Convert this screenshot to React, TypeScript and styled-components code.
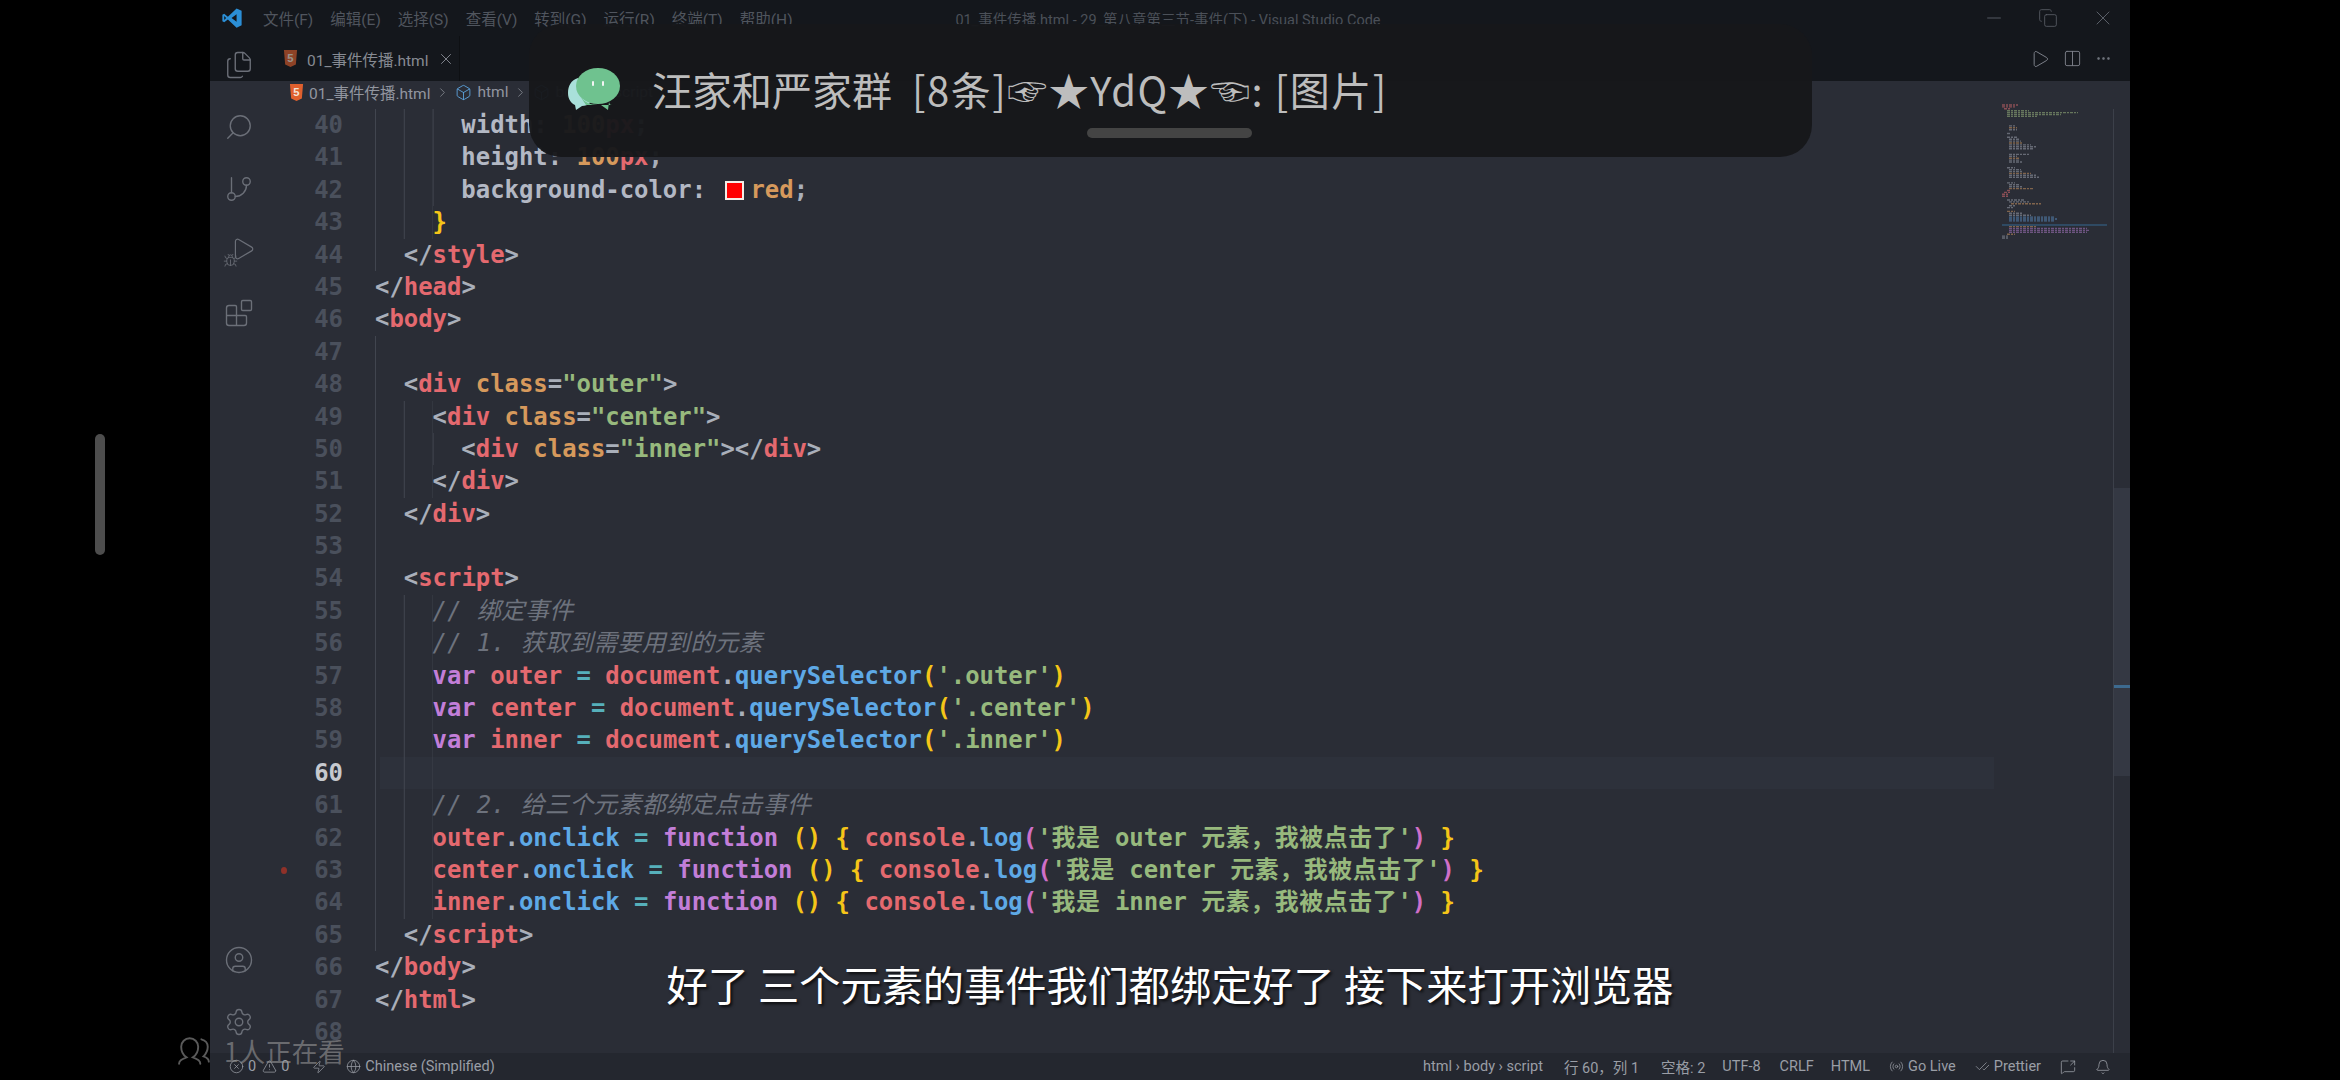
import React from "react";
import styled, { createGlobalStyle } from "styled-components";
import {
    Bell, Blocks, Bug, CheckCheck, CircleUser, CircleX, Columns2, Copy, Ellipsis, Files, Globe,
    GitBranch, Minus, Play, Radio, Search, Settings, TriangleAlert, X, Zap, Box, ChevronRight,
    MessageSquareShare,
} from "lucide-react";

type Kind = "tag" | "punct" | "attr" | "str" | "cjk" | "kw" | "fn" | "op" | "paren" | "pink" | "prop" | "num" | "unit" | "var" | "comment" | "swatch";
type Tok = [string, Kind];
type Line = { n: number; depth: number; toks: Tok[]; indent?: number };

const COLORS: Record<Kind, string> = {
    tag: "#e4696f",
    punct: "#a9afba",
    attr: "#d6995c",
    str: "#97b97d",
    cjk: "#97b97d",
    kw: "#c27ed8",
    fn: "#5ea9e6",
    op: "#56b0bb",
    paren: "#f5c518",
    pink: "#cf6fc8",
    prop: "#b3b8c4",
    num: "#d6995c",
    unit: "#e4696f",
    var: "#e4696f",
    comment: "#6d727d",
    swatch: "#ff0000",
};

const q = (name: string): Tok[] => [["var ", "kw"], [name, "var"], [" = ", "op"], ["document", "var"], [".", "punct"], ["querySelector", "fn"], ["(", "paren"], [`'.${name}'`, "str"], [")", "paren"]];
const click = (name: string): Tok[] => [
    [name, "var"], [".", "punct"], ["onclick", "fn"], [" = ", "op"], ["function ", "kw"], ["() { ", "paren"],
    ["console", "var"], [".", "punct"], ["log", "fn"], ["(", "pink"], ["'", "str"], ["我是", "cjk"], [` ${name} `, "str"], ["元素，我被点击了", "cjk"], ["'", "str"], [")", "pink"], [" }", "paren"],
];

const LINES: Line[] = [
    { n: 40, depth: 3, indent: 3, toks: [["width: ", "prop"], ["100", "num"], ["px", "unit"], [";", "punct"]] },
    { n: 41, depth: 3, indent: 3, toks: [["height: ", "prop"], ["100", "num"], ["px", "unit"], [";", "punct"]] },
    { n: 42, depth: 3, indent: 3, toks: [["background-color: ", "prop"], ["", "swatch"], ["red", "num"], [";", "punct"]] },
    { n: 43, depth: 2, indent: 2, toks: [["}", "paren"]] },
    { n: 44, depth: 1, indent: 1, toks: [["</", "punct"], ["style", "tag"], [">", "punct"]] },
    { n: 45, depth: 0, toks: [["</", "punct"], ["head", "tag"], [">", "punct"]] },
    { n: 46, depth: 0, toks: [["<", "punct"], ["body", "tag"], [">", "punct"]] },
    { n: 47, depth: 1, toks: [] },
    { n: 48, depth: 1, indent: 1, toks: [["<", "punct"], ["div", "tag"], [" class", "attr"], ["=", "punct"], ['"outer"', "str"], [">", "punct"]] },
    { n: 49, depth: 2, indent: 2, toks: [["<", "punct"], ["div", "tag"], [" class", "attr"], ["=", "punct"], ['"center"', "str"], [">", "punct"]] },
    { n: 50, depth: 3, indent: 3, toks: [["<", "punct"], ["div", "tag"], [" class", "attr"], ["=", "punct"], ['"inner"', "str"], ["></", "punct"], ["div", "tag"], [">", "punct"]] },
    { n: 51, depth: 2, indent: 2, toks: [["</", "punct"], ["div", "tag"], [">", "punct"]] },
    { n: 52, depth: 1, indent: 1, toks: [["</", "punct"], ["div", "tag"], [">", "punct"]] },
    { n: 53, depth: 1, toks: [] },
    { n: 54, depth: 1, indent: 1, toks: [["<", "punct"], ["script", "tag"], [">", "punct"]] },
    { n: 55, depth: 2, indent: 2, toks: [["// 绑定事件", "comment"]] },
    { n: 56, depth: 2, indent: 2, toks: [["// 1. 获取到需要用到的元素", "comment"]] },
    { n: 57, depth: 2, indent: 2, toks: q("outer") },
    { n: 58, depth: 2, indent: 2, toks: q("center") },
    { n: 59, depth: 2, indent: 2, toks: q("inner") },
    { n: 60, depth: 2, toks: [] },
    { n: 61, depth: 2, indent: 2, toks: [["// 2. 给三个元素都绑定点击事件", "comment"]] },
    { n: 62, depth: 2, indent: 2, toks: click("outer") },
    { n: 63, depth: 2, indent: 2, toks: click("center") },
    { n: 64, depth: 2, indent: 2, toks: click("inner") },
    { n: 65, depth: 1, indent: 1, toks: [["</", "punct"], ["script", "tag"], [">", "punct"]] },
    { n: 66, depth: 0, toks: [["</", "punct"], ["body", "tag"], [">", "punct"]] },
    { n: 67, depth: 0, toks: [["</", "punct"], ["html", "tag"], [">", "punct"]] },
    { n: 68, depth: 0, toks: [] },
];

const MENUS = ["文件(F)", "编辑(E)", "选择(S)", "查看(V)", "转到(G)", "运行(R)", "终端(T)", "帮助(H)"];

// minimap rows: [line, indent, width]
const MINI: [number, number, number][] = [
    [0, 0, 16], [1, 0, 14], [2, 2, 6], [3, 5, 22], [4, 5, 71], [5, 5, 54], [6, 5, 30],
    [11, 7, 6], [12, 7, 8], [13, 7, 8], [15, 5, 3],
    [17, 5, 10], [18, 7, 10], [19, 7, 12], [20, 7, 14], [21, 7, 22], [22, 7, 28], [23, 7, 24],
    [26, 7, 20], [27, 7, 8], [28, 7, 10], [29, 7, 10], [30, 7, 14],
    [33, 5, 8], [34, 7, 12], [35, 7, 14], [36, 7, 22], [37, 7, 28], [38, 7, 30],
    [41, 5, 8], [42, 7, 10], [43, 7, 14], [44, 7, 24], [45, 5, 3],
    [46, 2, 6], [47, 0, 6], [48, 0, 6], [50, 5, 18], [51, 7, 20], [52, 9, 30], [53, 7, 6], [54, 5, 6],
    [56, 5, 8], [57, 7, 14], [58, 7, 22], [59, 7, 46], [60, 7, 48], [61, 7, 46],
    [64, 7, 28], [65, 7, 78], [66, 7, 80], [67, 7, 78], [68, 5, 8], [69, 0, 6], [70, 0, 6],
];

const miniTint = (line: number) => {
    if (line < 3 || (line > 44 && line < 50)) return "#c9656b";
    if (line < 7) return "#8fa878";
    if (line > 58 && line < 62) return "#5a8fc4";
    if (line > 64 && line < 68) return "#9a6fb4";
    if (line % 4 === 0) return "#b98a5c";
    return "#8f94a0";
};

const GlobalStyle = createGlobalStyle`
    html, body {
        margin: 0;
        padding: 0;
        background: #000;
        overflow: hidden;
    }
    * {
        box-sizing: border-box;
    }
`;

const App: React.FC = () => {
    return (
        <Page>
            <GlobalStyle />
            <SideGutter>
                <ScrollPill />
            </SideGutter>
            <Frame>
                <TitleBar>
                    <MenuGroup>
                        <VsLogo />
                        {MENUS.map((m) => <MenuItem key={m}>{m}</MenuItem>)}
                    </MenuGroup>
                    <WindowTitle>01_事件传播.html - 29_第八章第三节-事件(下) - Visual Studio Code</WindowTitle>
                    <WindowButtons>
                        <Minus size={22} strokeWidth={1} />
                        <Copy size={20} strokeWidth={1} />
                        <X size={24} strokeWidth={1} />
                    </WindowButtons>
                </TitleBar>
                <TabBar>
                    <Tab>
                        <Html5 $dim />
                        <TabName>01_事件传播.html</TabName>
                        <X size={18} strokeWidth={1.2} color="#8b8f97" />
                    </Tab>
                    <TabActions>
                        <Play size={20} strokeWidth={1.2} />
                        <Columns2 size={19} strokeWidth={1.2} />
                        <Ellipsis size={17} strokeWidth={1.5} />
                    </TabActions>
                </TabBar>
                <Main>
                    <ActivityBar>
                        <ActivityGroup>
                            <Files size={30} strokeWidth={1.1} />
                            <Search size={30} strokeWidth={1.1} style={{ transform: "scaleX(-1)" }} />
                            <GitBranch size={30} strokeWidth={1.1} />
                            <DebugIcon>
                                <Play size={26} strokeWidth={1.1} />
                                <BugBadge><Bug size={15} strokeWidth={1.3} /></BugBadge>
                            </DebugIcon>
                            <Blocks size={30} strokeWidth={1.1} />
                        </ActivityGroup>
                        <ActivityGroup>
                            <CircleUser size={30} strokeWidth={1.1} />
                            <Settings size={30} strokeWidth={1.1} />
                        </ActivityGroup>
                    </ActivityBar>
                    <EditorColumn>
                        <Breadcrumb>
                            <Html5 />
                            <CrumbText>01_事件传播.html</CrumbText>
                            <ChevronRight size={15} strokeWidth={1.2} />
                            <Box size={17} strokeWidth={1.2} color="#5ea9e6" />
                            <CrumbText>html</CrumbText>
                            <ChevronRight size={15} strokeWidth={1.2} />
                            <Box size={17} strokeWidth={1.2} color="#5ea9e6" />
                            <CrumbText>body</CrumbText>
                            <ChevronRight size={15} strokeWidth={1.2} />
                            <CrumbText>script</CrumbText>
                        </Breadcrumb>
                        <EditorBody>
                            <Code>
                                {LINES.map((line) => (
                                    <Row key={line.n}>
                                        <LineNo $active={line.n === 60}>
                                            {line.n === 63 && <BreakDot />}
                                            {line.n}
                                        </LineNo>
                                        <CodeCell $active={line.n === 60} $depth={line.depth}>
                                            {" ".repeat((line.indent ?? 0) * 2)}
                                            {line.toks.map(([text, kind], i) =>
                                                kind === "swatch"
                                                    ? <Swatch key={i} />
                                                    : <Token key={i} $kind={kind}>{text}</Token>
                                            )}
                                        </CodeCell>
                                    </Row>
                                ))}
                            </Code>
                            <Minimap>
                                <svg width="113" height="150" viewBox="0 0 113 150">
                                    <rect x="8" y="120" width="105" height="2" fill="#2f4a63" />
                                    {MINI.map(([l, x, w], i) => (
                                        <line key={i} x1={8 + x} x2={8 + x + w} y1={l * 1.9 + 1} y2={l * 1.9 + 1} stroke={miniTint(l)} strokeWidth="1.4" strokeDasharray="3 1 2 1" opacity="0.6" />
                                    ))}
                                </svg>
                            </Minimap>
                            <ScrollTrack>
                                <ScrollThumb />
                                <ScrollTick />
                            </ScrollTrack>
                        </EditorBody>
                    </EditorColumn>
                </Main>
                <StatusBar>
                    <StatusGroup>
                        <StatusItem><CircleX size={15} strokeWidth={1.2} /> 0</StatusItem>
                        <StatusItem $ml={-13}><TriangleAlert size={15} strokeWidth={1.2} /> 0</StatusItem>
                        <StatusItem $ml={4}><Zap size={14} strokeWidth={1.2} /></StatusItem>
                        <StatusItem $ml={1}><Globe size={15} strokeWidth={1.2} /> Chinese (Simplified)</StatusItem>
                    </StatusGroup>
                    <StatusGroup>
                        <StatusItem>html › body › script</StatusItem>
                        <StatusItem $ml={2}>行 60，列 1</StatusItem>
                        <StatusItem $ml={3}>空格: 2</StatusItem>
                        <StatusItem $ml={-2}>UTF-8</StatusItem>
                        <StatusItem>CRLF</StatusItem>
                        <StatusItem $ml={-2}>HTML</StatusItem>
                        <StatusItem><Radio size={15} strokeWidth={1.2} /> Go Live</StatusItem>
                        <StatusItem><CheckCheck size={15} strokeWidth={1.2} /> Prettier</StatusItem>
                        <StatusItem><MessageSquareShare size={16} strokeWidth={1.2} /></StatusItem>
                        <StatusItem><Bell size={16} strokeWidth={1.2} /></StatusItem>
                    </StatusGroup>
                </StatusBar>
            </Frame>
            <Notification>
                <ChatIcon />
                <NotificationText>
                    汪家和严家群{"\u2002"}<NotificationTail>[8条]☞★YdQ★☜: [图片]</NotificationTail>
                </NotificationText>
                <NotificationGrip />
            </Notification>
            <Subtitle>好了 三个元素的事件我们都绑定好了 接下来打开浏览器</Subtitle>
            <Viewers>
                <ViewerIcon />
                <span>1人正在看</span>
            </Viewers>
        </Page>
    );
};

export default App;

const VsLogo = () => (
    <LogoSvg viewBox="0 0 24 24">
        <path d="M17 1.5 22.5 4v16L17 22.5 7.5 13.5 3.5 16.6 1.5 15.6V8.4l2-1 4 3.1L17 1.5Zm0 6.3L11.5 12l5.5 4.2V7.8ZM3.5 9.8v4.4L5.6 12 3.5 9.8Z" fill="#2b8fd6" />
    </LogoSvg>
);

const Html5: React.FC<{ $dim?: boolean }> = ({ $dim }) => (
    <HtmlSvg viewBox="0 0 16 18" $dim={$dim}>
        <path d="M1 0h14l-1.3 15.5L8 18l-5.7-2.5L1 0Z" fill="#e0602e" />
        <text x="8" y="13" textAnchor="middle" fontSize="12" fontWeight="700" fontFamily="'Liberation Sans', sans-serif" fill="#f3e4d8">5</text>
    </HtmlSvg>
);

const ChatIcon = () => (
    <ChatSvg viewBox="0 0 52 42">
        <path d="M10 10C3 12 0 18 0 25c0 6 3 10 7 12l1 5 6-4c3 0 6-1 8-3Z" fill="#a9e0da" />
        <ellipse cx="30" cy="18" rx="22" ry="18" fill="#6fc28f" />
        <path d="M12 28c4 6 10 9 18 9h16c-4 0-4 0-5-3l-1 8-7-5H18Z" fill="#6fc28f" />
        <rect x="24" y="13" width="2" height="5" rx="1" fill="#f4f4f4" />
        <rect x="34" y="13" width="2" height="5" rx="1" fill="#f4f4f4" />
    </ChatSvg>
);

const ViewerIcon = () => (
    <ViewerSvg viewBox="0 0 32 26" fill="none" stroke="currentColor" strokeWidth="1.8" strokeLinecap="round">
        <path d="M1 25c0-3 2-4 7-6-3-2-5-6-5-10a8 8 0 0 1 16 0c0 4-2 8-5 10 5 2 7 3 7 6" />
        <path d="M22 2c4 1 6 4 6 7 0 4-2 7-4 9 3 1 5 3 5 5" />
    </ViewerSvg>
);

const MONO = `"DejaVu Sans Mono", "Noto Sans CJK SC", monospace`;
const UI = `Roboto, "Noto Sans CJK SC", sans-serif`;

const Page = styled.div`
    position: relative;
    display: flex;
    width: 2340px;
    height: 1080px;
    background: #000;
    overflow: hidden;
    font-family: ${UI};
`;

const SideGutter = styled.div`
    position: relative;
    width: 210px;
    flex-shrink: 0;
`;

const ScrollPill = styled.div`
    position: absolute;
    left: 95px;
    top: 434px;
    width: 10px;
    height: 121px;
    border-radius: 5px;
    background: #4d4d4d;
`;

const Frame = styled.div`
    display: flex;
    flex-direction: column;
    width: 1920px;
    height: 1080px;
    background: #2a2d36;
`;

const TitleBar = styled.div`
    display: grid;
    grid-template-columns: 1fr auto 1fr;
    align-items: center;
    height: 36px;
    padding: 0 15px 0 11px;
    background: #14171c;
`;

const MenuGroup = styled.div`
    display: flex;
    align-items: center;
    gap: 17px;
`;

const LogoSvg = styled.svg`
    width: 22px;
    height: 22px;
    margin-right: 3px;
`;

const MenuItem = styled.span`
    font-size: 15.5px;
    color: #50555e;
`;

const WindowTitle = styled.div`
    font-size: 14.5px;
    color: #4b5058;
    white-space: nowrap;
`;

const WindowButtons = styled.div`
    display: flex;
    justify-content: flex-end;
    align-items: center;
    gap: 33px;
    color: #5a5f68;
`;

const TabBar = styled.div`
    display: flex;
    justify-content: space-between;
    height: 45px;
    padding-right: 18px;
    background: #14171c;
`;

const Tab = styled.div`
    display: flex;
    align-items: center;
    width: 250px;
    padding-left: 73px;
    gap: 9px;
    border-right: 1px solid #0e1013;
`;

const TabName = styled.span`
    font-size: 15.5px;
    color: #878b93;
    white-space: nowrap;
`;

const TabActions = styled.div`
    display: flex;
    align-items: center;
    gap: 13px;
    color: #7c8089;
`;

const HtmlSvg = styled.svg<{ $dim?: boolean }>`
    width: 15px;
    height: 17px;
    flex-shrink: 0;
    opacity: ${(p) => (p.$dim ? 0.6 : 1)};
`;

const Main = styled.div`
    display: flex;
    flex: 1;
    min-height: 0;
`;

const ActivityBar = styled.div`
    position: relative;
    display: flex;
    flex-direction: column;
    justify-content: space-between;
    width: 60px;
    margin-top: -31px;
    padding: 0 0 16px 14px;
    color: #6b6f78;
`;

const ActivityGroup = styled.div`
    display: flex;
    flex-direction: column;
    gap: 32px;
`;

const DebugIcon = styled.div`
    position: relative;
    width: 30px;
    height: 30px;
    padding-left: 6px;
`;

const BugBadge = styled.div`
    position: absolute;
    left: -1px;
    bottom: -2px;
    display: flex;
`;

const EditorColumn = styled.div`
    display: flex;
    flex-direction: column;
    flex: 1;
    min-width: 0;
`;

const Breadcrumb = styled.div`
    display: flex;
    align-items: center;
    gap: 5px;
    height: 28px;
    padding: 0 0 6px 19px;
    color: #8d9199;
`;

const CrumbText = styled.span`
    font-size: 15.5px;
    color: #9296a0;
    white-space: nowrap;
`;

const EditorBody = styled.div`
    display: flex;
    flex: 1;
    min-height: 0;
`;

const Code = styled.div`
    flex: 1;
    min-width: 0;
    overflow: hidden;
`;

const Row = styled.div`
    display: flex;
    height: 32.4px;
    line-height: 32.4px;
    font-family: ${MONO};
    font-size: 23.92px;
    font-weight: 700;
    white-space: pre;
`;

const LineNo = styled.div<{ $active?: boolean }>`
    position: relative;
    width: 105px;
    padding-right: 32px;
    text-align: right;
    flex-shrink: 0;
    color: ${(p) => (p.$active ? "#c6c9cf" : "#4a505c")};
`;

const BreakDot = styled.span`
    position: absolute;
    left: 11px;
    top: 13px;
    width: 6px;
    height: 7px;
    border-radius: 50%;
    background: #8f3129;
`;

const CodeCell = styled.div<{ $active?: boolean; $depth: number }>`
    position: relative;
    flex: 1;
    background: ${(p) => (p.$active ? "linear-gradient(#2d313b, #2d313b) 5px 0 no-repeat" : "transparent")};

    &::before {
        content: "";
        position: absolute;
        left: 0;
        top: 0;
        bottom: 0;
        width: ${(p) => p.$depth * 28.8}px;
        background-image: linear-gradient(to right, #41454f 1px, transparent 1px);
        background-size: 28.8px 100%;
    }
`;

const Token = styled.span<{ $kind: Kind }>`
    position: relative;
    color: ${(p) => COLORS[p.$kind]};
    font-weight: ${(p) => (p.$kind === "comment" ? 400 : 700)};
    font-style: ${(p) => (p.$kind === "comment" ? "italic" : "normal")};
    letter-spacing: ${(p) => (p.$kind === "cjk" ? "0.6px" : p.$kind === "comment" ? "0.3px" : "0")};
`;

const Swatch = styled.span`
    display: inline-block;
    position: relative;
    top: 2px;
    width: 19px;
    height: 19px;
    margin: 0 6px 0 5px;
    background: #f00;
    border: 2px solid #f4ece6;
`;

const Minimap = styled.div`
    width: 119px;
    flex-shrink: 0;
    margin-top: -5px;
`;

const ScrollTrack = styled.div`
    position: relative;
    width: 17px;
    flex-shrink: 0;
    border-left: 1px solid #3c404a;
`;

const ScrollThumb = styled.div`
    margin-top: 379px;
    height: 288px;
    background: #343843;
`;

const ScrollTick = styled.div`
    position: absolute;
    left: 0;
    right: 0;
    top: 576px;
    height: 3px;
    background: #3d6a8f;
`;

const StatusBar = styled.div`
    display: flex;
    justify-content: space-between;
    align-items: center;
    height: 27px;
    padding: 0 19px 0 19px;
    background: #24272f;
    color: #9a9ea6;
    font-size: 14.5px;
`;

const StatusGroup = styled.div`
    display: flex;
    align-items: center;
    gap: 19px;
`;

const StatusItem = styled.span<{ $ml?: number }>`
    display: inline-flex;
    align-items: center;
    gap: 4px;
    margin-left: ${(p) => p.$ml ?? 0}px;
    white-space: nowrap;
`;

const Notification = styled.div`
    position: absolute;
    left: 529px;
    top: 24px;
    display: flex;
    align-items: center;
    width: 1283px;
    height: 133px;
    padding: 0 0 4px 39px;
    border-radius: 32px;
    background: rgba(23, 24, 27, 0.97);
`;

const ChatSvg = styled.svg`
    width: 52px;
    height: 42px;
    flex-shrink: 0;
`;

const NotificationText = styled.div`
    margin-left: 32px;
    font-family: "Noto Sans CJK SC", "DejaVu Sans", sans-serif;
    font-size: 40px;
    color: #bdbdbd;
    white-space: nowrap;
`;

const NotificationTail = styled.span`
    letter-spacing: 1.5px;
`;

const NotificationGrip = styled.div`
    position: absolute;
    left: 558px;
    top: 104px;
    width: 165px;
    height: 10px;
    border-radius: 5px;
    background: #444;
`;

const Subtitle = styled.div`
    position: absolute;
    left: 210px;
    width: 1920px;
    top: 955px;
    text-align: center;
    font-family: "Noto Sans CJK SC", sans-serif;
    font-size: 41.2px;
    line-height: 56px;
    color: #fff;
    text-shadow: 2px 2px 3px rgba(0, 0, 0, 0.75);
    white-space: nowrap;
`;

const Viewers = styled.div`
    position: absolute;
    left: 178px;
    top: 1031px;
    display: flex;
    align-items: center;
    gap: 12px;
    font-family: "Noto Sans CJK SC", sans-serif;
    font-size: 26.5px;
    color: rgba(150, 150, 150, 0.6);
`;

const ViewerSvg = styled.svg`
    width: 34px;
    height: 28px;
`;
